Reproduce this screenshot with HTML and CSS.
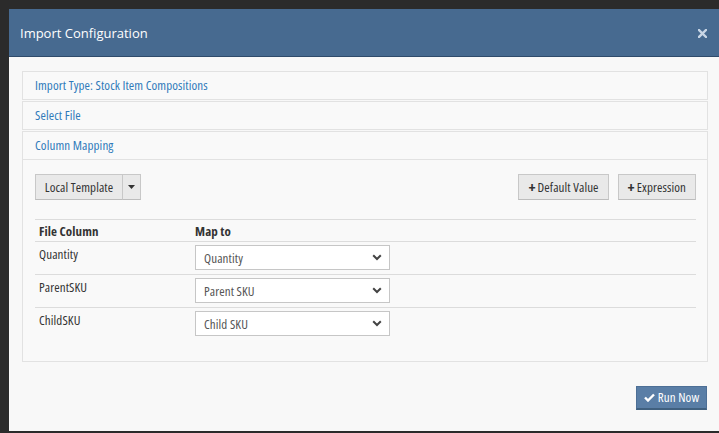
FILE: index.html
```html
<!DOCTYPE html>
<html>
<head>
<meta charset="utf-8">
<link rel="stylesheet" href="styles.css">
</head>
<body>
<div class="modal">
  <div class="modal-header">
    <span class="modal-title">Import Configuration</span>
    <span class="close"><svg width="9" height="9" viewBox="0 0 9 9"><path d="M1 1L8 8M8 1L1 8" stroke="#c9d6e6" stroke-width="2.4" stroke-linecap="square"/></svg></span>
  </div>
  <div class="modal-body">
    <div class="panel"><div class="panel-heading">Import Type: Stock Item Compositions</div></div>
    <div class="panel"><div class="panel-heading">Select File</div></div>
    <div class="panel panel-open">
      <div class="panel-heading">Column Mapping</div>
      <div class="panel-body">
        <div class="toolbar">
          <div class="btn-group">
            <button class="btn main-btn">Local Template</button>
            <button class="btn caret-btn"><svg width="7" height="4" viewBox="0 0 7 4"><path d="M0 0H7L3.5 4Z" fill="#333"/></svg></button>
          </div>
          <div class="right-btns">
            <button class="btn"><span class="plus">+</span>Default Value</button>
            <button class="btn"><span class="plus">+</span>Expression</button>
          </div>
        </div>
        <table class="map-table">
          <thead>
            <tr><th class="c1">File Column</th><th>Map to</th></tr>
          </thead>
          <tbody>
            <tr><td class="c1">Quantity</td><td><div class="select">Quantity<svg width="10" height="7" viewBox="0 0 10 7"><path d="M1.2 1.2L5 5L8.8 1.2" stroke="#444" stroke-width="2" fill="none"/></svg></div></td></tr>
            <tr><td class="c1">ParentSKU</td><td><div class="select">Parent SKU<svg width="10" height="7" viewBox="0 0 10 7"><path d="M1.2 1.2L5 5L8.8 1.2" stroke="#444" stroke-width="2" fill="none"/></svg></div></td></tr>
            <tr><td class="c1">ChildSKU</td><td><div class="select">Child SKU<svg width="10" height="7" viewBox="0 0 10 7"><path d="M1.2 1.2L5 5L8.8 1.2" stroke="#444" stroke-width="2" fill="none"/></svg></div></td></tr>
          </tbody>
        </table>
      </div>
    </div>
  </div>
  <div class="modal-footer">
    <button class="btn-primary"><svg width="11" height="9" viewBox="0 0 11 9"><path d="M1 4.5L4 7.5L10 1.5" stroke="#fff" stroke-width="2.4" fill="none"/></svg>Run Now</button>
  </div>
</div>
</body>
</html>
```

FILE: styles.css
```css
* { box-sizing: border-box; }
html, body { margin: 0; padding: 0; }
body {
  background: #2b2b2b;
  font-family: "Open Sans", "Liberation Sans", sans-serif;
  font-size: 13px;
  font-stretch: 75%;
  letter-spacing: 0.1px;
  color: #333;
  height: 433px;
  overflow: hidden;
  padding: 9px 0 0 9px;
}
.modal {
  background: #f8f8f8;
  height: 422px;
  display: flex;
  flex-direction: column;
}
.modal-header {
  background: #476a90;
  height: 48px;
  border-bottom: 1px solid #2f4b6b;
  display: flex;
  align-items: center;
  justify-content: space-between;
  padding: 0 12px 0 11px;
}
.modal-title {
  color: #fff;
  font-size: 13px;
  font-stretch: 100%;
  letter-spacing: 0;
}
.close { display: flex; margin-top: 1px; }
.modal-body {
  padding: 14px 11px 0 13px;
}
.panel {
  border: 1px solid #e2e2e2;
  background: #f9f9f9;
  margin-bottom: 1px;
}
.panel-heading {
  height: 27px;
  line-height: 27px;
  padding: 0 12px;
  color: #2f79b9;
}
.panel-open .panel-heading {
  height: 28px;
  border-bottom: 1px solid #e2e2e2;
}
.panel-body {
  padding: 14px 11px 20px 12px;
}
.toolbar {
  display: flex;
  justify-content: space-between;
  margin-bottom: 19px;
}
.btn-group { display: flex; }
.btn {
  font-family: inherit;
  font-size: 13px;
  font-stretch: inherit;
  letter-spacing: inherit;
  white-space: nowrap;
  color: #333;
  background: #e9e9e9;
  border: 1px solid #c8c8c8;
  border-bottom-color: #bdbdbd;
  height: 26px;
  padding: 0 9px;
  display: flex;
  align-items: center;
}
.main-btn { width: 87px; padding: 0; justify-content: center; border-right: none; }
.btn-group .caret-btn {
  width: 19px;
  padding: 0;
  justify-content: center;
  border-left: 1px solid #c8c8c8;
}
.right-btns { display: flex; gap: 9px; }
.plus {
  font-weight: 700;
  font-size: 15px;
  margin-right: 2px;
  line-height: 1;
}
.map-table {
  width: 100%;
  border-collapse: collapse;
  border-top: 1px solid #dcdcdc;
}
.map-table th {
  text-align: left;
  font-weight: 700;
  height: 22px;
  padding: 0 4px;
  border-bottom: 1px solid #dcdcdc;
  vertical-align: middle;
}
.map-table td {
  height: 33px;
  padding: 3px 4px 4px 4px;
  border-bottom: 1px solid #dcdcdc;
  vertical-align: top;
}
.map-table td.c1 { padding-top: 3px; }
.c1 { width: 156px; }
.map-table tr:last-child td { border-bottom: none; }
.select {
  width: 195px;
  height: 25px;
  background: #fff;
  border: 1px solid #c6c6c6;
  display: flex;
  align-items: center;
  justify-content: space-between;
  padding: 0 7px 0 8px;
  color: #555;
}
.modal-footer {
  display: flex;
  justify-content: flex-end;
  padding: 23px 12px 0 0;
}
.btn-primary {
  font-family: inherit;
  font-size: 13px;
  font-stretch: inherit;
  letter-spacing: inherit;
  white-space: nowrap;
  color: #fff;
  background: #5a7ea6;
  border: 1px solid #4d6f96;
  border-bottom: 2px solid #40607f;
  height: 24px;
  width: 71px;
  display: flex;
  align-items: center;
  justify-content: center;
  gap: 3px;
  padding: 0;
}
```
